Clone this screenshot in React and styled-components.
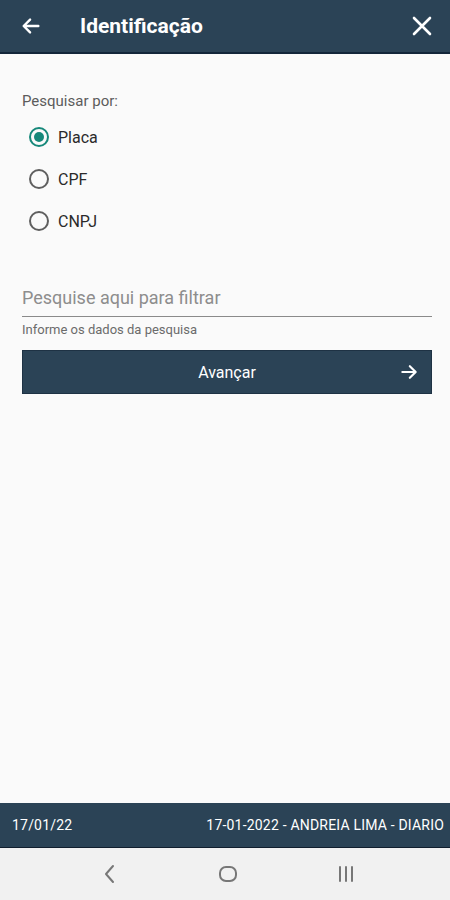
import React, { useState } from "react";
import styled, { createGlobalStyle } from "styled-components";

const GlobalStyle = createGlobalStyle`
  html, body {
    margin: 0;
    padding: 0;
    background: #fafafa;
    font-family: Roboto, "Liberation Sans", sans-serif;
  }
  #root {
    height: 900px;
  }
`;

const Screen = styled.div`
  width: 450px;
  height: 900px;
  display: flex;
  flex-direction: column;
  background: #fafafa;
`;

const Header = styled.header`
  height: 54px;
  flex-shrink: 0;
  display: flex;
  align-items: center;
  background: #2b4356;
  border-bottom: 2px solid #14263a;
  box-sizing: border-box;
  padding: 0 16px 0 20px;
  color: #fff;
`;

const IconButton = styled.button`
  background: none;
  border: none;
  padding: 0;
  color: #fff;
  display: flex;
  align-items: center;
  justify-content: center;
  cursor: pointer;
`;

const Title = styled.h1`
  flex: 1;
  margin: 0 0 0 38px;
  font-size: 21px;
  font-weight: 700;
  color: #fff;
`;

const Content = styled.main`
  flex: 1;
  padding: 38px 18px 0 22px;
`;

const Label = styled.div`
  font-size: 15px;
  color: #5c5c5c;
  margin-bottom: 14px;
`;

const RadioGroup = styled.div`
  display: flex;
  flex-direction: column;
  gap: 16px;
  padding-left: 7px;
`;

const RadioRow = styled.label`
  display: flex;
  align-items: center;
  height: 26px;
  font-size: 16px;
  color: #2a2a2a;
  cursor: pointer;
`;

const RadioCircle = styled.span`
  width: 20px;
  height: 20px;
  box-sizing: border-box;
  border-radius: 50%;
  border: 2px solid ${(p) => (p.checked ? "#16887a" : "#5f5f5f")};
  display: flex;
  align-items: center;
  justify-content: center;
  margin-right: 9px;

  &::after {
    content: "";
    width: 10px;
    height: 10px;
    border-radius: 50%;
    background: #16887a;
    display: ${(p) => (p.checked ? "block" : "none")};
  }
`;

const Field = styled.div`
  margin-top: 47px;
`;

const Input = styled.input`
  width: 100%;
  box-sizing: border-box;
  border: none;
  border-bottom: 1px solid #8a8a8a;
  background: transparent;
  font-family: inherit;
  font-size: 18px;
  color: #333;
  padding: 6px 0 8px;
  outline: none;

  &::placeholder {
    color: #8d8d8d;
  }
`;

const Helper = styled.div`
  font-size: 13px;
  color: #6b6b6b;
  margin-top: 5px;
`;

const PrimaryButton = styled.button`
  margin-top: 13px;
  width: 100%;
  height: 44px;
  position: relative;
  background: #2b4356;
  border: 1px solid #1e3244;
  color: #fff;
  font-family: inherit;
  font-size: 16px;
  display: flex;
  align-items: center;
  justify-content: center;
  cursor: pointer;
`;

const ButtonIcon = styled.span`
  position: absolute;
  right: 12px;
  top: 50%;
  transform: translateY(-50%);
  display: flex;
`;

const Footer = styled.footer`
  height: 44px;
  flex-shrink: 0;
  background: #2b4356;
  border-bottom: 1px solid #101e2e;
  display: flex;
  align-items: center;
  justify-content: space-between;
  padding: 0 6px 0 12px;
  color: #fff;
  font-size: 14px;
  font-weight: 400;
  letter-spacing: 0.2px;
`;

const NavBar = styled.nav`
  height: 52px;
  flex-shrink: 0;
  background: #f1f1f1;
  display: flex;
  align-items: center;
  justify-content: center;
  padding-left: 6px;
`;

const NavSlot = styled.div`
  width: 118px;
  display: flex;
  justify-content: center;
  color: #777;
`;

const ArrowLeft = () => (
  <svg width="22" height="22" viewBox="0 0 24 24" fill="none" stroke="currentColor" strokeWidth="2.6" strokeLinecap="round" strokeLinejoin="round">
    <path d="M20 12H5M11 5l-7 7 7 7" />
  </svg>
);

const CloseIcon = () => (
  <svg width="24" height="24" viewBox="0 0 24 24" fill="none" stroke="currentColor" strokeWidth="2.6" strokeLinecap="round">
    <path d="M4 4l16 16M20 4L4 20" />
  </svg>
);

const ArrowRight = () => (
  <svg width="20" height="20" viewBox="0 0 24 24" fill="none" stroke="currentColor" strokeWidth="2.6" strokeLinecap="round" strokeLinejoin="round">
    <path d="M4 12h15M13 5l7 7-7 7" />
  </svg>
);

const options = ["Placa", "CPF", "CNPJ"];

export default function App() {
  const [selected, setSelected] = useState("Placa");

  return (
    <Screen>
      <GlobalStyle />
      <Header>
        <IconButton aria-label="Voltar">
          <ArrowLeft />
        </IconButton>
        <Title>Identificação</Title>
        <IconButton aria-label="Fechar">
          <CloseIcon />
        </IconButton>
      </Header>

      <Content>
        <Label>Pesquisar por:</Label>
        <RadioGroup>
          {options.map((opt) => (
            <RadioRow key={opt} onClick={() => setSelected(opt)}>
              <RadioCircle checked={selected === opt} />
              {opt}
            </RadioRow>
          ))}
        </RadioGroup>

        <Field>
          <Input placeholder="Pesquise aqui para filtrar" />
          <Helper>Informe os dados da pesquisa</Helper>
        </Field>

        <PrimaryButton>
          Avançar
          <ButtonIcon>
            <ArrowRight />
          </ButtonIcon>
        </PrimaryButton>
      </Content>

      <Footer>
        <span>17/01/22</span>
        <span>17-01-2022 - ANDREIA LIMA - DIARIO</span>
      </Footer>

      <NavBar>
        <NavSlot>
          <svg width="14" height="22" viewBox="0 0 14 22" fill="none" stroke="currentColor" strokeWidth="2" strokeLinecap="round" strokeLinejoin="round">
            <path d="M10 3L3 11l7 8" />
          </svg>
        </NavSlot>
        <NavSlot>
          <svg width="20" height="20" viewBox="0 0 20 20" fill="none" stroke="currentColor" strokeWidth="2">
            <rect x="2" y="3" width="16" height="14" rx="6" />
          </svg>
        </NavSlot>
        <NavSlot>
          <svg width="20" height="20" viewBox="0 0 20 20" fill="none" stroke="currentColor" strokeWidth="2" strokeLinecap="round">
            <path d="M4 3v14M10 3v14M16 3v14" />
          </svg>
        </NavSlot>
      </NavBar>
    </Screen>
  );
}
